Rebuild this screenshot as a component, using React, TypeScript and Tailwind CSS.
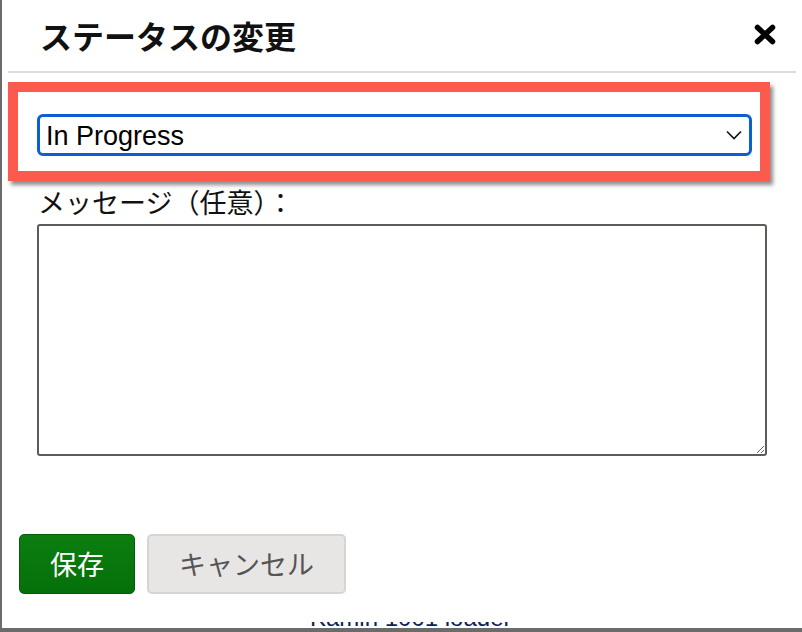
import { useState } from "react";

const jp = { fontFamily: '"Noto Sans CJK JP", "Noto Sans", sans-serif' };
const latin = { fontFamily: '"Liberation Sans", Arial, sans-serif' };

export default function App() {
  const [status] = useState("In Progress");
  const [message, setMessage] = useState("");

  return (
    <div className="relative w-[802px] h-[632px] overflow-hidden bg-[#6b6b6b] pl-[2px] pb-[4px]">
      <div className="flex h-full flex-col bg-white">
        {/* Header */}
        <div className="mx-[6px] flex h-[73px] shrink-0 items-center justify-between border-b-2 border-[#dcdcdc] pl-[32px] pr-[20px]">
          <h2 className="-mt-[1px] text-[32px] font-bold leading-none text-[#111]" style={jp}>
            ステータスの変更
          </h2>
          <button className="-mt-[3px] flex h-[22px] w-[22px] items-center justify-center">
            <svg width="22" height="21" viewBox="0 0 22 21">
              <path d="M3.5 3.5 L18.5 17.5 M18.5 3.5 L3.5 17.5" stroke="#000" strokeWidth="5.5" strokeLinecap="round" />
            </svg>
          </button>
        </div>

        {/* Highlighted status select */}
        <div className="ml-[6px] mt-[9px] w-[762px] shrink-0 border-[10px] border-[#fd5a4e] pb-[15px] pl-[19px] pr-[8px] pt-[22px] shadow-[3px_4px_4px_rgba(0,0,0,0.45)]">
          <div className="flex h-[42px] items-center justify-between rounded-[6px] border-[3px] border-[#0a5fd3] pl-[6px] pr-[7px]">
            <span className="mt-[2px] text-[27px] leading-none text-black" style={latin}>
              {status}
            </span>
            <svg width="16" height="10" viewBox="0 0 16 10">
              <path d="M1 1.5 L8 8.5 L15 1.5" fill="none" stroke="#111" strokeWidth="1.6" />
            </svg>
          </div>
        </div>

        {/* Message */}
        <div className="pl-[35px]">
          <label className="ml-[1px] mt-[5px] block text-[27px] leading-[32px] text-[#111]" style={jp}>
            メッセージ（任意）：
          </label>
          <textarea
            value={message}
            onChange={(e) => setMessage(e.target.value)}
            className="mt-[6px] block h-[232px] w-[730px] rounded-[3px] border-2 border-[#5c5c58] bg-white outline-none"
          />
        </div>

        {/* Actions */}
        <div className="ml-[17px] mt-[78px] flex gap-[12px]">
          <button
            className="h-[60px] w-[116px] rounded-[5px] border border-[#065a08] bg-gradient-to-b from-[#0b7e0f] to-[#06700a] text-[27px] text-white"
            style={jp}
          >
            保存
          </button>
          <button
            className="h-[60px] w-[199px] rounded-[5px] border-2 border-[#d6d5d3] bg-[#e7e6e5] text-[27px] text-[#555]"
            style={jp}
          >
            キャンセル
          </button>
        </div>
      </div>

      {/* page text peeking out below the dialog */}
      <div className="absolute bottom-[4px] left-[310px] h-[6px] overflow-hidden">
        <span className="block -mt-[16px] text-[24px] leading-[24px] text-[#0b1f5c]" style={latin}>
          Kamin 1001 loader
        </span>
      </div>
    </div>
  );
}
